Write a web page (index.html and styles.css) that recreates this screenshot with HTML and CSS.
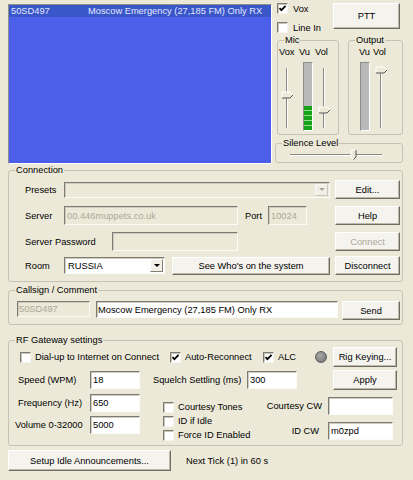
FILE: index.html
```html
<!DOCTYPE html>
<html>
<head>
<meta charset="utf-8">
<link rel="stylesheet" href="styles.css">
</head>
<body>
<div class="dlg">
  <div class="top">
    <div class="listbox">
      <div class="lrow sel"><span class="c1">50SD497</span><span>Moscow Emergency (27,185 FM) Only RX</span></div>
    </div>
    <div class="side">
      <div class="srow1">
        <div class="checks">
          <div class="chk"><span class="box"><svg width="9" height="9" viewBox="0 0 9 9"><path d="M1.5 4.2 L3.4 6.2 L7.6 1.8" fill="none" stroke="#000" stroke-width="1.7"/></svg></span>Vox</div>
          <div class="chk chk-line"><span class="box"></span>Line In</div>
        </div>
        <button class="btn ptt">PTT</button>
      </div>
      <div class="srow2">
        <fieldset class="grp mic">
          <legend>Mic</legend>
          <div class="mlabels"><span class="l-vox">Vox</span><span class="l-vu">Vu</span><span>Vol</span></div>
          <div class="mctrls">
            <svg class="vslider" width="17" height="70" viewBox="0 0 17 70">
              <rect x="8" y="6" width="1" height="60" fill="#8a8a82"/><rect x="9" y="6" width="1" height="60" fill="#fff"/>
              <polygon points="4,30 12,30 15,33 12,36 4,36" fill="#ECE9D8"/>
              <polyline points="4,36 4,30 12,30 15,33" fill="none" stroke="#fff" stroke-width="1"/>
              <polyline points="15,33 12,36 4,36" fill="none" stroke="#555" stroke-width="1"/>
            </svg>
            <div class="vu"><div class="segs"><i></i><i></i><i></i><i></i><i></i></div></div>
            <svg class="vslider vs-vol" width="17" height="70" viewBox="0 0 17 70">
              <rect x="8" y="6" width="1" height="60" fill="#8a8a82"/><rect x="9" y="6" width="1" height="60" fill="#fff"/>
              <polygon points="4,45 12,45 15,48 12,51 4,51" fill="#ECE9D8"/>
              <polyline points="4,51 4,45 12,45 15,48" fill="none" stroke="#fff" stroke-width="1"/>
              <polyline points="15,48 12,51 4,51" fill="none" stroke="#555" stroke-width="1"/>
            </svg>
          </div>
        </fieldset>
        <fieldset class="grp out">
          <legend>Output</legend>
          <div class="olabels"><span class="l-ovu">Vu</span><span>Vol</span></div>
          <div class="octrls">
            <div class="vu"></div>
            <svg class="vslider vs-vol" width="17" height="70" viewBox="0 0 17 70">
              <rect x="8" y="6" width="1" height="60" fill="#8a8a82"/><rect x="9" y="6" width="1" height="60" fill="#fff"/>
              <polygon points="4,5 12,5 15,8 12,11 4,11" fill="#ECE9D8"/>
              <polyline points="4,11 4,5 12,5 15,8" fill="none" stroke="#fff" stroke-width="1"/>
              <polyline points="15,8 12,11 4,11" fill="none" stroke="#555" stroke-width="1"/>
            </svg>
          </div>
        </fieldset>
      </div>
      <fieldset class="grp silence">
        <legend>Silence Level</legend>
        <svg class="hslider" width="126" height="12" viewBox="0 0 126 12">
          <rect x="14" y="5" width="92" height="1" fill="#8a8a82"/><rect x="14" y="6" width="92" height="1" fill="#fff"/>
          <polygon points="75,1 80,1 80,8 77.5,10.5 75,8" fill="#ECE9D8"/>
          <polyline points="77.5,10.5 75,8 75,1 80,1" fill="none" stroke="#fff" stroke-width="1"/>
          <polyline points="80,1 80,8 77.5,10.5" fill="none" stroke="#555" stroke-width="1"/>
        </svg>
      </fieldset>
    </div>
  </div>

  <fieldset class="grp conn">
    <legend>Connection</legend>
    <div class="crow cr1">
      <span class="lbl l-short">Presets</span>
      <div class="combo dis cb-presets"><span class="arrow"><i class="tri"></i></span></div>
      <button class="btn b-side b-edit">Edit...</button>
    </div>
    <div class="crow cr2">
      <span class="lbl l-short">Server</span>
      <div class="inp dis i-server">00.446muppets.co.uk</div>
      <span class="lbl l-port">Port</span>
      <div class="inp dis i-port">10024</div>
      <button class="btn b-side b-help">Help</button>
    </div>
    <div class="crow cr3">
      <span class="lbl l-pass">Server Password</span>
      <div class="inp dis i-pass"></div>
      <button class="btn b-side dis b-connect">Connect</button>
    </div>
    <div class="crow cr4">
      <span class="lbl l-short">Room</span>
      <div class="combo cb-room">RUSSIA<span class="arrow"><i class="tri"></i></span></div>
      <button class="btn b-who">See Who's on the system</button>
      <button class="btn b-side b-disc">Disconnect</button>
    </div>
  </fieldset>

  <fieldset class="grp call">
    <legend>Callsign / Comment</legend>
    <div class="callrow">
      <div class="inp dis i-call">50SD497</div>
      <div class="inp i-comment">Moscow Emergency (27,185 FM) Only RX</div>
      <button class="btn b-send">Send</button>
    </div>
  </fieldset>

  <fieldset class="grp rf">
    <legend>RF Gateway settings</legend>
    <div class="rf1">
      <div class="chk c-dial"><span class="box"></span>Dial-up to Internet on Connect</div>
      <div class="chk c-auto"><span class="box"><svg width="9" height="9" viewBox="0 0 9 9"><path d="M1.5 4.2 L3.4 6.2 L7.6 1.8" fill="none" stroke="#000" stroke-width="1.7"/></svg></span>Auto-Reconnect</div>
      <div class="chk c-alc"><span class="box"><svg width="9" height="9" viewBox="0 0 9 9"><path d="M1.5 4.2 L3.4 6.2 L7.6 1.8" fill="none" stroke="#000" stroke-width="1.7"/></svg></span>ALC</div>
      <span class="led"></span>
      <button class="btn b-rig">Rig Keying...</button>
    </div>
    <div class="rf2">
      <span class="lbl l-speed">Speed (WPM)</span>
      <div class="inp i-num">18</div>
      <span class="lbl l-squelch">Squelch Settling (ms)</span>
      <div class="inp i-num">300</div>
      <button class="btn b-apply">Apply</button>
    </div>
    <div class="rf3">
      <div class="colA">
        <div class="arow"><span class="lbl l-freq">Frequency (Hz)</span><div class="inp i-num">650</div></div>
        <div class="arow"><span class="lbl l-vol">Volume 0-32000</span><div class="inp i-num">5000</div></div>
      </div>
      <div class="colB">
        <div class="chk c-small"><span class="box"></span>Courtesy Tones</div>
        <div class="chk c-small"><span class="box"></span>ID if Idle</div>
        <div class="chk c-small"><span class="box"></span>Force ID Enabled</div>
      </div>
      <div class="colC">
        <div class="cwrow"><span class="lbl l-ccw">Courtesy CW</span><div class="inp i-cw"></div></div>
        <div class="cwrow"><span class="lbl l-idcw">ID CW</span><div class="inp i-cw">m0zpd</div></div>
      </div>
    </div>
  </fieldset>

  <div class="bottom">
    <button class="btn b-setup">Setup Idle Announcements...</button>
    <span class="tick">Next Tick (1) in 60 s</span>
  </div>
</div>
</body>
</html>
```

FILE: styles.css
```css
* { box-sizing: border-box; }
body {
  margin: 0;
  background: #ECE9D8;
  font-family: "Liberation Sans", Arial, sans-serif;
  font-size: 9.3px;
  color: #000;
}
.dlg { width: 413px; height: 480px; }

/* top area */
.top { display: flex; height: 164px; }
.listbox {
  margin: 4px 0 0 8px;
  width: 264px;
  height: 160px;
  background: #4B5FE8;
  border: 1px solid;
  border-color: #8e8e88 #fff #fff #8e8e88;
}
.lrow { display: flex; height: 12px; line-height: 12px; color: #e4e7ff; white-space: nowrap; }
.sel { background: #3A57C9; }
.c1 { width: 79px; padding-left: 2px; }

.side { margin-left: 3px; width: 128px; }
.srow1 { display: flex; height: 34px; }
.checks { width: 58px; padding: 3px 0 0 2px; }
.chk { display: flex; align-items: center; height: 11px; white-space: nowrap; }
.chk-line { margin-top: 8px; }
.box {
  width: 11px; height: 11px; flex: none;
  margin-right: 5px;
  background: #fff;
  border: 1px solid;
  border-color: #7d7c74 #f6f5f0 #f6f5f0 #7d7c74;
  box-shadow: inset 1px 1px 0 #c9c6b8;
  display: flex; align-items: center; justify-content: center;
}
.box svg { display: block; }

.btn {
  font: inherit;
  color: #000;
  margin: 0;
  padding: 0;
  background: #F4F3EE;
  border: 1px solid;
  border-color: #fff #6f6d62 #6f6d62 #fff;
  box-shadow: inset -1px -1px 0 #bdb9aa;
  border-radius: 0;
  white-space: nowrap;
}
.btn.dis { color: #ACA899; }
.ptt { width: 67px; height: 26px; margin-top: 3px; }

.grp {
  margin: 0;
  padding: 0;
  min-width: 0;
  border: 1px solid #C6C3B4;
  border-radius: 3px;
}
.grp legend {
  margin-left: 6px;
  padding: 0 1px;
  height: 12px;
  line-height: 12px;
}

.srow2 { display: flex; }
.mic { margin-left: 2px; width: 62px; height: 101px; }
.out { margin-left: 9px; width: 55px; height: 101px; }
.mlabels, .olabels { display: flex; height: 11px; line-height: 11px; margin-top: 1px; }
.mlabels { padding-left: 1px; }
.l-vox { width: 20px; }
.l-vu { width: 16px; }
.olabels { padding-left: 10px; }
.l-ovu { width: 14px; }
.mctrls, .octrls { display: flex; margin-top: 4px; }
.octrls { padding-left: 11px; }
.vslider { display: block; flex: none; }
.vu {
  width: 10px; height: 69px; margin-left: 8px;
  background: #B9B9B9;
  border: 1px solid;
  border-color: #8e8e88 #fff #fff #8e8e88;
  display: flex; flex-direction: column; justify-content: flex-end;
}
.octrls .vu { margin-left: 0; }
.vs-vol { margin-left: 2px; }
.segs { display: flex; flex-direction: column; gap: 1px; background: #8fe08f; }
.segs i { display: block; height: 4px; background: #17A317; }

.silence { margin-top: 2px; width: 128px; height: 26px; }
.hslider { display: block; }

/* connection */
.conn { margin-left: 8px; width: 395px; height: 118px; }
.crow { display: flex; align-items: center; height: 19px; padding-left: 16px; white-space: nowrap; }
.cr1 { margin-top: 4px; }
.cr2 { margin-top: 7px; }
.cr3 { margin-top: 7px; }
.cr4 { margin-top: 5px; }
.lbl { white-space: nowrap; flex: none; }
.l-short { width: 39px; }
.l-pass { width: 87px; }
.l-port { margin-left: 7px; width: 23px; }

.inp {
  flex: none;
  display: flex; align-items: center;
  background: #fff;
  border: 1px solid;
  border-color: #7d7c74 #fbfbf8 #fbfbf8 #7d7c74;
  box-shadow: inset 1px 1px 0 #cfccbf;
  padding-left: 2px;
  white-space: nowrap;
  overflow: hidden;
}
.inp.dis { background: #ECE9D8; color: #ACA899; }
.i-server { width: 174px; height: 19px; }
.i-port { width: 39px; height: 19px; }
.i-pass { width: 126px; height: 19px; }

.combo {
  flex: none;
  display: flex; align-items: center;
  background: #fff;
  border: 1px solid;
  border-color: #7d7c74 #fbfbf8 #fbfbf8 #7d7c74;
  box-shadow: inset 1px 1px 0 #cfccbf;
  padding: 1px 1px 1px 3px;
}
.combo.dis { background: #ECE9D8; }
.cb-presets { width: 266px; height: 16px; }
.cb-room { width: 101px; height: 17px; }
.arrow {
  margin-left: auto;
  width: 13px; height: 100%;
  display: flex; align-items: center; justify-content: center;
  background: #F0EFE8;
  border: 1px solid;
  border-color: #fff #807e74 #807e74 #fff;
}
.tri {
  display: block; width: 0; height: 0;
  border-left: 3px solid transparent;
  border-right: 3px solid transparent;
  border-top: 3px solid #000;
}
.combo.dis .arrow { border-color: #f7f6f2 #c9c6b8 #c9c6b8 #f7f6f2; }
.combo.dis .tri { border-top-color: #ACA899; }

.b-side { width: 65px; height: 19px; }
.b-edit { margin-left: 5px; }
.b-help { margin-left: 28px; }
.b-connect { margin-left: 97px; }
.b-who { margin-left: 7px; width: 158px; height: 18px; }
.b-disc { margin-left: 5px; }

/* callsign */
.call { margin: 2px 0 0 8px; width: 395px; height: 41px; }
.callrow { display: flex; align-items: flex-start; margin-top: 5px; padding-left: 8px; }
.i-call { width: 73px; height: 16px; padding-left: 1px; }
.i-comment { margin-left: 6px; width: 242px; height: 17px; padding-left: 1px; }
.b-send { margin-left: 4px; width: 58px; height: 19px; }

/* rf gateway */
.rf { margin: 9px 0 0 8px; width: 395px; height: 112px; }
.rf1 { display: flex; align-items: center; height: 20px; margin-top: 1px; padding-left: 11px; }
.c-dial { width: 150px; }
.c-auto { width: 93px; }
.c-alc { width: 52px; }
.rf1 .box, .c-small .box { margin-right: 4px; }
.led {
  width: 12px; height: 12px; flex: none;
  border-radius: 50%;
  background: radial-gradient(circle at 40% 35%, #a9a9a9, #6f6f6f);
  border: 1px solid #5d5d5d;
}
.b-rig { margin-left: 6px; width: 64px; height: 20px; }

.rf2 { display: flex; align-items: center; height: 20px; margin-top: 3px; padding-left: 9px; }
.l-speed { width: 72px; }
.i-num { width: 50px; height: 18px; }
.l-squelch { margin-left: 13px; width: 94px; }
.b-apply { margin-left: 36px; width: 64px; height: 20px; }

.rf3 { display: flex; }
.colA { width: 131px; }
.arow { display: flex; align-items: center; height: 18px; margin-top: 4px; }
.l-freq { width: 81px; padding-left: 9px; }
.l-vol { width: 81px; padding-left: 6px; }
.colB { margin-left: 23px; width: 87px; padding-top: 10px; }
.c-small { height: 14px; }
.colC { width: 143px; }
.cwrow { display: flex; align-items: center; justify-content: flex-end; height: 18px; margin-top: 7px; }
.l-ccw { padding-right: 6px; }
.l-idcw { padding-right: 9px; }
.i-cw { width: 65px; height: 18px; }

/* bottom */
.bottom { display: flex; align-items: center; margin: 4px 0 0 8px; height: 21px; }
.b-setup { width: 163px; height: 21px; }
.tick { margin-left: 15px; }
```
